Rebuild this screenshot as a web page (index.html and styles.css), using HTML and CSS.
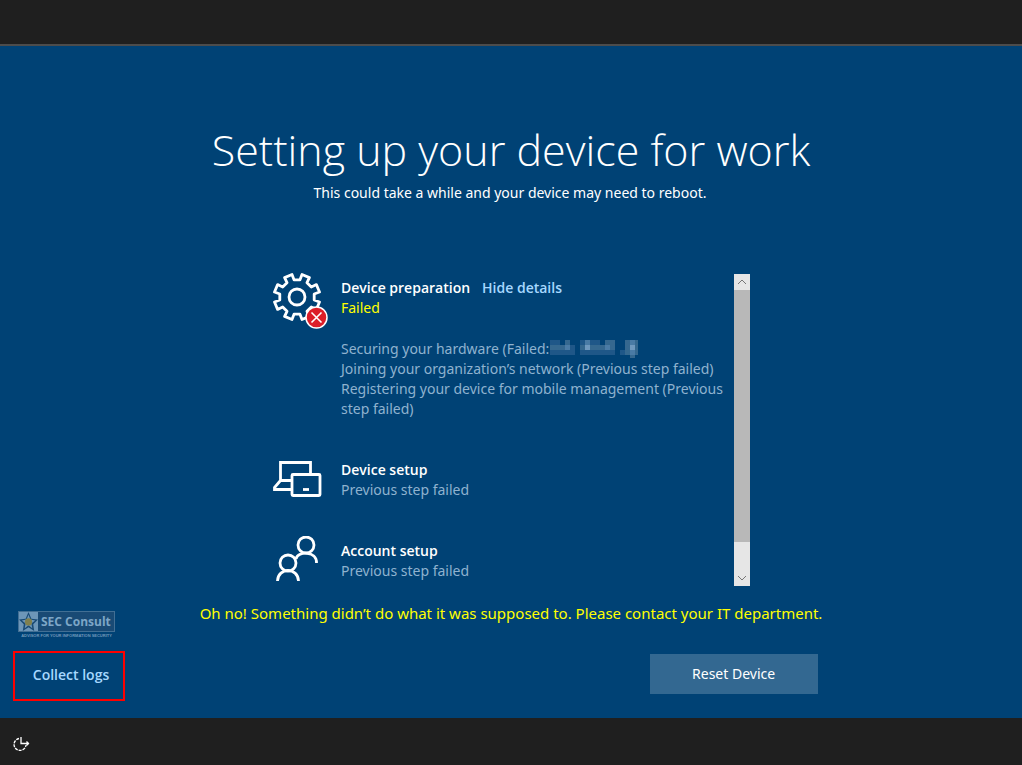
FILE: index.html
```html
<!DOCTYPE html>
<html lang="en">
<head>
<meta charset="utf-8">
<title>Setting up your device for work</title>
<link rel="stylesheet" href="styles.css">
</head>
<body>
<div class="topbar"></div>
<main class="screen">
  <header class="heading">
    <h1 class="title">Setting up your device for work</h1>
    <p class="subtitle">This could take a while and your device may need to reboot.</p>
  </header>

  <section class="progress">
    <div class="steps">
      <article class="step step-preparation">
        <svg class="icon icon-gear" viewBox="0 0 56 56" fill="none" stroke="#fff" stroke-width="2.8">
          <path stroke-linejoin="round" transform="translate(24 24)" d="M-3-17.2L-5-22.5L-12.4-19.4L-10-14.3L-14.3-10L-19.4-12.4L-22.5-5L-17.2-3V3L-22.5 5L-19.4 12.4L-14.3 10L-10 14.3L-12.4 19.4L-5 22.5L-3 17.2H3L5 22.5L12.4 19.4L10 14.3L14.3 10L19.4 12.4L22.5 5L17.2 3V-3L22.5-5L19.4-12.4L14.3-10L10-14.3L12.4-19.4L5-22.5L3-17.2Z"/>
          <circle cx="24" cy="24" r="8"/>
          <circle cx="43.500" cy="44.500" r="10.500" fill="#dc1e28" stroke-width="1.500"/>
          <path stroke-width="1.600" d="M38.500 39.500l10 10M48.500 39.500l-10 10"/>
        </svg>
        <div class="step-body">
          <div class="step-head">
            <h2 class="step-title">Device preparation</h2>
            <a class="link" href="#details">Hide details</a>
          </div>
          <p class="step-error">Failed</p>
          <ul class="details" id="details">
            <li>Securing your hardware (Failed:<svg class="redacted" viewBox="0 0 90 18" shape-rendering="crispEdges" aria-hidden="true">
              <path fill="#1f5788" d="M1 0h25v15H1zM31 0h35v15H31zM71 10h5v5h-5z"/>
              <path fill="#004275" d="M11 0h5v5h-5zM21 0h5v5h-5zM51 0h5v5h-5z"/>
              <path fill="#35688f" d="M1 5h15v5H1zM16 0h5v10h-5zM31 5h35v5H31zM56 0h10v5H56zM76 0h13v15H76zM81 15h5v3h-5z"/>
              <path fill="#4a7ba5" d="M16 5h5v5h-5zM36 0h5v10h-5zM56 5h5v5h-5zM81 0h5v15h-5z"/>
              <path fill="#7099be" d="M36 5h5v5h-5zM81 5h5v5h-5z"/>
            </svg></li>
            <li>Joining your organization’s network (Previous step failed)</li>
            <li>Registering your device for mobile management (Previous step failed)</li>
          </ul>
        </div>
      </article>

      <article class="step step-device">
        <svg class="icon" viewBox="0 0 56 50" fill="none" stroke="#fff" stroke-width="2.800">
          <path d="M7.500 20.500V2.500H37.500V14M19 20.500H7.500L1.500 27.500V29.500H19"/>
          <rect x="19" y="14.500" width="28" height="21" rx="1"/>
          <path d="M30 29.500h6"/>
        </svg>
        <div class="step-body">
          <h2 class="step-title">Device setup</h2>
          <p class="step-status">Previous step failed</p>
        </div>
      </article>

      <article class="step step-account">
        <svg class="icon" viewBox="0 0 56 50" fill="none" stroke="#fff" stroke-width="2.800">
          <circle cx="33" cy="9" r="8"/>
          <circle cx="15" cy="27" r="8"/>
          <path d="M4.500 45C5 31 25 31 25.500 45M23 23C25 14.500 44 15 43.500 27"/>
        </svg>
        <div class="step-body">
          <h2 class="step-title">Account setup</h2>
          <p class="step-status">Previous step failed</p>
        </div>
      </article>
    </div>
    <div class="scrollbar">
      <button class="scroll-button" type="button" aria-label="Scroll up"><svg viewBox="0 0 16 16"><path d="M4 10l4-4 4 4"/></svg></button>
      <div class="scroll-thumb"></div>
      <button class="scroll-button" type="button" aria-label="Scroll down"><svg viewBox="0 0 16 16"><path d="M4 6l4 4 4-4"/></svg></button>
    </div>
  </section>

  <p class="message">Oh no! Something didn’t do what it was supposed to. Please contact your IT department.</p>

  <div class="actions">
    <button class="collect" type="button">Collect logs</button>
    <button class="reset" type="button">Reset Device</button>
  </div>

  <div class="brand">
    <div class="brand-box">
      <svg class="brand-mark" viewBox="0 0 20 20"><rect width="20" height="20" fill="#6d96b8"/><path fill="#194a75" d="M10 0l3 7 7 1-5 5 1 7-6-4-6 4 1-7-5-5 7-1z"/><path fill="#6d96b8" d="M10 3l2 5 5 1-4 3 1 5-4-3-4 3 1-5-4-3 5-1z"/><circle cx="10" cy="10.500" r="3.800" fill="#80804f"/></svg>
      <span class="brand-name">SEC Consult</span>
    </div>
    <p class="brand-tagline">ADVISOR FOR YOUR INFORMATION SECURITY</p>
  </div>
</main>
<footer class="taskbar">
  <button class="access" type="button" aria-label="Ease of access">
    <svg viewBox="0 0 18 16" fill="none" stroke="#fff" stroke-width="1.300"><path stroke-dasharray="3 1" d="M6 2.500A6 6 0 1 0 13 9"/><path d="M8 1v6.500h8M13.500 5.500l2 2-2 2"/></svg>
  </button>
</footer>
</body>
</html>
```
FILE: styles.css
```css
* { box-sizing: border-box; }
body {
  margin: 0;
  min-height: 100vh;
  display: flex;
  flex-direction: column;
  background: #004275;
  color: #fff;
  font: 14px/20px "Noto Sans", "Open Sans", sans-serif;
}
h1, h2, p, ul { margin: 0; padding: 0; }
button { font: inherit; color: inherit; border: 0; padding: 0; }
.topbar { height: 46px; background: #1f1f1f; border-bottom: 2px solid #4c4c4c; }
.screen { position: relative; flex: 1; display: flex; flex-direction: column; align-items: center; }
.heading { padding-top: 72px; text-align: center; }
.title { margin-bottom: 2px; font-family: "Open Sans", sans-serif; font-size: 43px; line-height: 63px; font-weight: 300; }
.subtitle { margin-right: 2px; }
.progress { display: flex; width: 478px; max-width: 100%; margin-top: 71px; }
.steps { flex: 1; min-width: 0; padding-left: 1px; }
.step { display: flex; gap: 12px; }
.step-preparation { min-height: 186px; }
.step-device { min-height: 76px; }
.icon { flex: none; width: 56px; height: 50px; }
.icon-gear { height: 56px; margin-top: -1px; }
.step-body { flex: 1; min-width: 0; }
.step-preparation .step-body { padding-top: 4px; }
.step-account .step-body { padding-top: 5px; }
.step-head { display: flex; gap: 12px; }
.step-title { font-family: "Open Sans", sans-serif; font-size: 14px; line-height: 20px; font-weight: 600; }
.link { color: #a6d8ff; font-family: "Open Sans", sans-serif; font-weight: 600; text-decoration: none; }
.step-error { color: #ff0; }
.step-status, .details { color: #8fb2cf; }
.details { list-style: none; margin-top: 21px; }
.redacted { width: 90px; height: 18px; vertical-align: -4px; }
.scrollbar { display: flex; flex-direction: column; width: 16px; height: 312px; background: #e6e6e6; }
.scroll-thumb { height: 252px; margin-bottom: auto; background: #b8b8b8; }
.scroll-button { height: 16px; background: #e6e6e6; }
.scroll-button svg { display: block; fill: none; stroke: #777; }
.message { margin-top: 15px; font-size: 15px; line-height: 24px; color: #ff0; }
.actions { align-self: stretch; display: flex; justify-content: space-between; margin: 26px 20% 16px 13px; }
.collect { width: 112px; height: 50px; border: 2px solid #f00; padding: 0 0 2px 4px; background: transparent; color: #a6d8ff; font-family: "Open Sans", sans-serif; font-weight: 600; }
.reset { width: 168px; height: 40px; margin-top: 3px; background: #336891; }
.brand { position: absolute; left: 18px; bottom: 79px; width: 97px; }
.brand-box { display: flex; align-items: center; gap: 3px; height: 21px; border: 1px solid #426f94; background: #194a75; }
.brand-mark { width: 19px; height: 19px; }
.brand-name { color: #7da6c7; font: 700 12px/18px "Open Sans", sans-serif; white-space: nowrap; }
.brand-tagline { margin-top: 1px; color: #7099bb; font: 700 4px/6px "Liberation Sans", sans-serif; text-align: center; white-space: nowrap; }
.taskbar { height: 47px; display: flex; align-items: center; padding: 4px 13px 0; background: #1f1f1f; }
.access { width: 18px; height: 16px; background: transparent; }
.access svg { display: block; }
```
